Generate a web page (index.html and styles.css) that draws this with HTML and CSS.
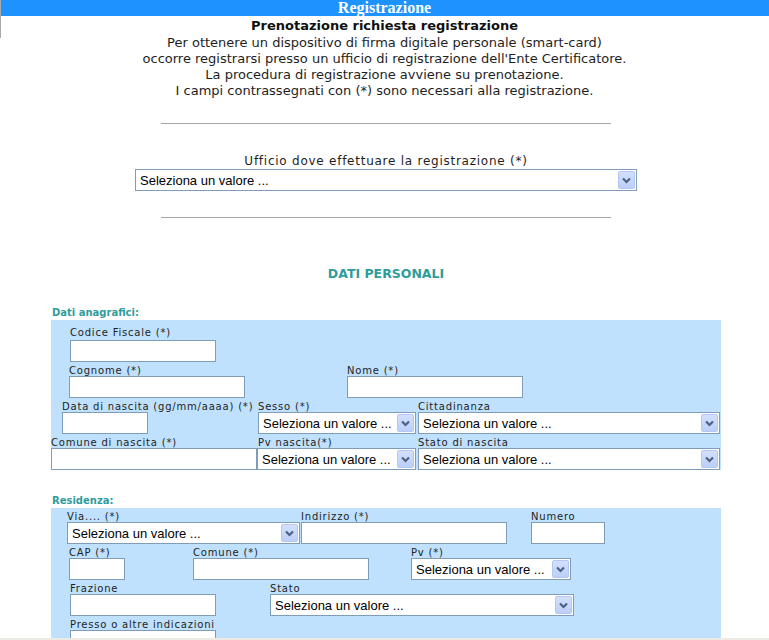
FILE: index.html
```html
<!DOCTYPE html>
<html lang="it">
<head>
<meta charset="utf-8">
<title>Registrazione</title>
<link rel="stylesheet" href="styles.css">
</head>
<body>
<div class="frame-edge"></div>
<header class="topbar">Registrazione</header>

<section class="intro">
  <h1 class="intro-title">Prenotazione richiesta registrazione</h1>
  <p class="intro-text">Per ottenere un dispositivo di firma digitale personale (smart-card)<br>
  occorre registrarsi presso un ufficio di registrazione dell'Ente Certificatore.<br>
  La procedura di registrazione avviene su prenotazione.<br>
  I campi contrassegnati con (*) sono necessari alla registrazione.</p>
</section>

<main class="page">
  <hr class="rule rule-top">
  <div class="office">
    <div class="office-label">Ufficio dove effettuare la registrazione (*)</div>
    <div class="sel w502"><span class="sel-text">Seleziona un valore ...</span><span class="sel-btn"><svg width="15" height="16" viewBox="0 0 15 16"><polyline points="4,6.5 7.5,10 11,6.5" fill="none" stroke="#4d6185" stroke-width="2.2"/></svg></span></div>
  </div>
  <hr class="rule rule-bottom">

  <h2 class="section-title">DATI PERSONALI</h2>

  <h3 class="group-title">Dati anagrafici:</h3>
  <div class="panel panel-anag">
    <div class="row">
      <div class="field ml19"><label class="first">Codice Fiscale (*)</label><div class="inp w146"></div></div>
    </div>
    <div class="row">
      <div class="field ml18 fw278"><label>Cognome (*)</label><div class="inp w176"></div></div>
      <div class="field"><label>Nome (*)</label><div class="inp w176"></div></div>
    </div>
    <div class="row">
      <div class="field ml11 fw196"><label>Data di nascita (gg/mm/aaaa) (*)</label><div class="inp w86"></div></div>
      <div class="field fw160"><label>Sesso (*)</label><div class="sel w158"><span class="sel-text">Seleziona un valore ...</span><span class="sel-btn"><svg width="15" height="16" viewBox="0 0 15 16"><polyline points="4,6.5 7.5,10 11,6.5" fill="none" stroke="#4d6185" stroke-width="2.2"/></svg></span></div></div>
      <div class="field"><label>Cittadinanza</label><div class="sel w302"><span class="sel-text">Seleziona un valore ...</span><span class="sel-btn"><svg width="15" height="16" viewBox="0 0 15 16"><polyline points="4,6.5 7.5,10 11,6.5" fill="none" stroke="#4d6185" stroke-width="2.2"/></svg></span></div></div>
    </div>
    <div class="row">
      <div class="field fw206"><label>Comune di nascita (*)</label><div class="inp w206"></div></div>
      <div class="field fw161"><label class="pl1">Pv nascita(*)</label><div class="sel w159"><span class="sel-text">Seleziona un valore ...</span><span class="sel-btn"><svg width="15" height="16" viewBox="0 0 15 16"><polyline points="4,6.5 7.5,10 11,6.5" fill="none" stroke="#4d6185" stroke-width="2.2"/></svg></span></div></div>
      <div class="field"><label>Stato di nascita</label><div class="sel w302"><span class="sel-text">Seleziona un valore ...</span><span class="sel-btn"><svg width="15" height="16" viewBox="0 0 15 16"><polyline points="4,6.5 7.5,10 11,6.5" fill="none" stroke="#4d6185" stroke-width="2.2"/></svg></span></div></div>
    </div>
  </div>

  <h3 class="group-title group-res">Residenza:</h3>
  <div class="panel panel-res">
    <div class="row">
      <div class="field ml16 fw234"><label>Via.... (*)</label><div class="sel w233"><span class="sel-text">Seleziona un valore ...</span><span class="sel-btn"><svg width="15" height="16" viewBox="0 0 15 16"><polyline points="4,6.5 7.5,10 11,6.5" fill="none" stroke="#4d6185" stroke-width="2.2"/></svg></span></div></div>
      <div class="field fw230"><label>Indirizzo (*)</label><div class="inp w206"></div></div>
      <div class="field"><label>Numero</label><div class="inp w74"></div></div>
    </div>
    <div class="row">
      <div class="field ml18 fw124"><label>CAP (*)</label><div class="inp w56"></div></div>
      <div class="field fw218"><label>Comune (*)</label><div class="inp w176"></div></div>
      <div class="field"><label>Pv (*)</label><div class="sel w160"><span class="sel-text">Seleziona un valore ...</span><span class="sel-btn"><svg width="15" height="16" viewBox="0 0 15 16"><polyline points="4,6.5 7.5,10 11,6.5" fill="none" stroke="#4d6185" stroke-width="2.2"/></svg></span></div></div>
    </div>
    <div class="row">
      <div class="field ml19 fw200"><label>Frazione</label><div class="inp w146"></div></div>
      <div class="field"><label>Stato</label><div class="sel w304"><span class="sel-text">Seleziona un valore ...</span><span class="sel-btn"><svg width="15" height="16" viewBox="0 0 15 16"><polyline points="4,6.5 7.5,10 11,6.5" fill="none" stroke="#4d6185" stroke-width="2.2"/></svg></span></div></div>
    </div>
    <div class="row">
      <div class="field ml19"><label>Presso o altre indicazioni</label><div class="inp w146"></div></div>
    </div>
  </div>
</main>
<div class="bottom-edge"></div>
</body>
</html>
```
FILE: styles.css
```css
* { box-sizing: border-box; }
html, body { margin: 0; padding: 0; background: #ffffff; }
body {
  font-family: "DejaVu Sans", sans-serif;
  color: #1e1e1e;
  overflow: hidden;
}
.frame-edge {
  position: absolute; left: 0; top: 0;
  width: 1px; height: 38px; background: #a9a9a9;
}
.bottom-edge {
  position: fixed; left: 0; right: 0; bottom: 0;
  height: 2px; background: #ecebe6;
}
.topbar {
  height: 16px;
  background: #1c93fe;
  color: #fff;
  font-family: "Liberation Serif", serif;
  font-weight: bold;
  font-size: 16px;
  line-height: 16px;
  text-align: center;
}
.intro { text-align: center; }
.intro-title {
  margin: 0;
  font-size: 13px;
  font-weight: bold;
  line-height: 18px;
  padding-top: 1px;
  color: #111;
}
.intro-text {
  margin: 0;
  font-size: 13px;
  line-height: 16px;
}
.page { width: 670px; margin-left: 51px; }
.rule {
  width: 450px;
  margin: 0 auto;
  border: 0;
  border-top: 1px solid #a6a6a6;
  height: 0;
}
.rule-top { margin-top: 24px; }
.office { margin-top: 28px; text-align: center; }
.office-label {
  font-size: 12px;
  letter-spacing: 0.75px;
  line-height: 16px;
  padding-top: 1px;
}
.office .sel { margin: 0 auto; }
.rule-bottom { margin-top: 26px; }
.section-title {
  margin: 48px 0 0;
  text-align: center;
  font-size: 12.5px;
  font-weight: bold;
  color: #2f9c9c;
  line-height: 16px;
}
.group-title {
  margin: 23px 0 0;
  font-size: 10px;
  font-weight: bold;
  color: #2f9c9c;
  line-height: 15px;
  padding-left: 1px;
}
.group-res { margin-top: 23px; }
.panel { background: #bfe1fd; }
.panel-anag { padding-top: 6px; }
.panel-res { padding-top: 0; height: 140px; }
.row { display: flex; }
.field { display: flex; flex-direction: column; }
.field label {
  font-size: 10px;
  letter-spacing: 0.8px;
  line-height: 18px;
  height: 14px;
  white-space: nowrap;
  color: #1e1e1e;
}
.field label.first { line-height: 14px; }
.pl1 { padding-left: 1px; }
.inp {
  height: 22px;
  background: #fff;
  border: 1px solid #7f9db9;
}
.sel {
  height: 22px;
  background: #fff;
  border: 1px solid #7f9db9;
  display: flex;
  align-items: center;
  padding: 1px;
}
.sel-text {
  flex: 1;
  font-family: "Liberation Sans", Arial, sans-serif;
  font-size: 13px;
  color: #000;
  padding-left: 3px;
  white-space: nowrap;
  overflow: hidden;
  text-align: left;
  letter-spacing: 0;
}
.sel-btn {
  width: 17px;
  height: 18px;
  flex: none;
  display: flex;
  align-items: center;
  justify-content: center;
  background: linear-gradient(#d3e0fd, #bccff9);
  border: 1px solid #b4c6f3;
  border-radius: 2px;
}
.sel-btn svg { display: block; }

.ml11 { margin-left: 11px; }
.ml16 { margin-left: 16px; }
.ml18 { margin-left: 18px; }
.ml19 { margin-left: 19px; }

.fw124 { width: 124px; }
.fw160 { width: 160px; }
.fw161 { width: 161px; }
.fw196 { width: 196px; }
.fw200 { width: 200px; }
.fw206 { width: 206px; }
.fw218 { width: 218px; }
.fw230 { width: 230px; }
.fw234 { width: 234px; }
.fw278 { width: 278px; }

.w56 { width: 56px; }
.w74 { width: 74px; }
.w86 { width: 86px; }
.w146 { width: 146px; }
.w158 { width: 158px; }
.w159 { width: 159px; }
.w160 { width: 160px; }
.w176 { width: 176px; }
.w206 { width: 206px; }
.w233 { width: 233px; }
.w302 { width: 302px; }
.w304 { width: 304px; }
.w502 { width: 502px; }
```
